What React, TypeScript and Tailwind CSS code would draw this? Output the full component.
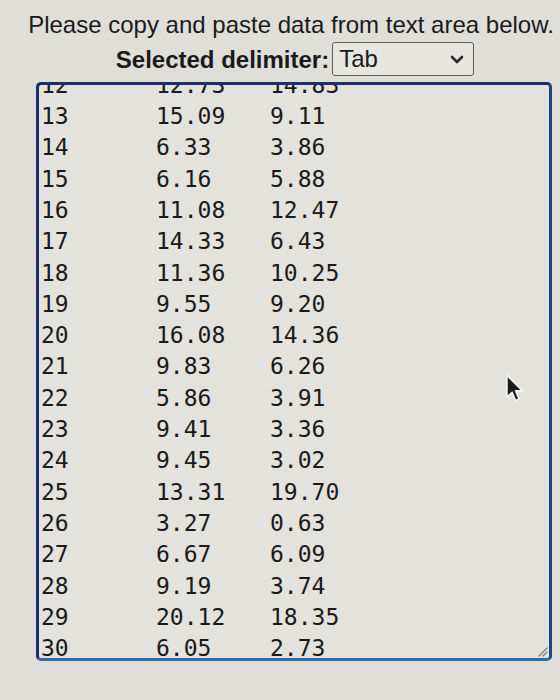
import React from 'react';

const rows: [string, string, string][] = [
  ['12', '12.73', '14.83'],
  ['13', '15.09', '9.11'],
  ['14', '6.33', '3.86'],
  ['15', '6.16', '5.88'],
  ['16', '11.08', '12.47'],
  ['17', '14.33', '6.43'],
  ['18', '11.36', '10.25'],
  ['19', '9.55', '9.20'],
  ['20', '16.08', '14.36'],
  ['21', '9.83', '6.26'],
  ['22', '5.86', '3.91'],
  ['23', '9.41', '3.36'],
  ['24', '9.45', '3.02'],
  ['25', '13.31', '19.70'],
  ['26', '3.27', '0.63'],
  ['27', '6.67', '6.09'],
  ['28', '9.19', '3.74'],
  ['29', '20.12', '18.35'],
  ['30', '6.05', '2.73'],
];

const App: React.FC = () => {
  return (
    <div className="relative w-[560px] h-[700px] overflow-hidden bg-[#dfded8] text-[#1a1a1a] font-['Liberation_Sans',Arial,sans-serif]">
      {/* HEADER */}
      <div className="pt-[9px] pl-[22px] text-center">
        <div className="text-[24px] leading-[31px] whitespace-nowrap">
          Please copy and paste data from text area below.
        </div>
        <div className="mt-[2px] pl-[8px] flex items-center justify-center">
          <span className="text-[24px] leading-[31px] font-bold">Selected delimiter:</span>
          <div className="ml-[3px] w-[142px] h-[34px] flex items-center justify-between border-[1.5px] border-[#5a5a5a] rounded-[3px] bg-[#e7e6e0] pl-[6px] pr-[9px]">
            <span className="text-[24px] leading-none">Tab</span>
            <svg width="14" height="9" viewBox="0 0 14 9">
              <path d="M2 2 L7 7 L12 2" fill="none" stroke="#2a2a2a" strokeWidth="2.6" strokeLinecap="round" strokeLinejoin="round" />
            </svg>
          </div>
        </div>
      </div>

      {/* TEXT AREA */}
      <div className="relative mt-[6px] ml-[36px] w-[516px] h-[579px] overflow-hidden rounded-[5px] border-[3px] border-t-[#1f2d6b] border-l-[#1f2d6b] border-r-[#22418a] border-b-[#2c6ca5] bg-[#e3e2dc]">
        <div className="mt-[-15.65px] font-['DejaVu_Sans_Mono',Menlo,monospace] text-[23px] text-[#1a1a1a]">
          {rows.map((r) => (
            <div key={r[0]} className="flex items-center h-[31.3px] pl-[2px]">
              <span className="w-[115px]">{r[0]}</span>
              <span className="w-[114px]">{r[1]}</span>
              <span>{r[2]}</span>
            </div>
          ))}
        </div>
        {/* resize grip */}
        <svg className="absolute right-[1px] bottom-[1px]" width="12" height="12" viewBox="0 0 12 12">
          <path d="M11 3 L3 11 M11 7 L7 11" stroke="#7a7a7a" strokeWidth="1.2" strokeLinecap="round" />
        </svg>
      </div>

      {/* mouse pointer */}
      <svg className="absolute left-[504px] top-[374px]" width="22" height="30" viewBox="0 0 18 26">
        <path d="M2 1 L2 20 L6.5 15.8 L9.5 23 L12.5 21.7 L9.6 14.6 L15.5 14.6 Z" fill="#1a1a1a" stroke="#f4f4f4" strokeWidth="1.4" strokeLinejoin="round" />
      </svg>
    </div>
  );
};

export default App;
